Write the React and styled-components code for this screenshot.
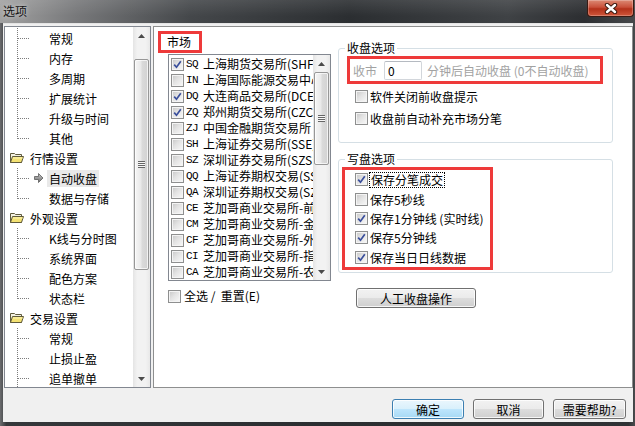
import React from "react";
import styled, { createGlobalStyle } from "styled-components";

const GlobalStyle = createGlobalStyle`
  html, body { margin: 0; padding: 0; background: #2b2e31; }
  body { font-family: "Noto Sans CJK SC", "Liberation Sans", sans-serif; font-size: 12px; color: #000; }
  * { box-sizing: border-box; }
`;

const RED = "#ee3a3a";

const Window = styled.div`
  width: 635px;
  height: 426px;
  display: flex;
  flex-direction: column;
  overflow: hidden;
  background: linear-gradient(to right, #6b6c6e 0%, #35383b 1%, #2b2e31 50%, #2f3235 99%, #4a4c4e 100%);
`;

const TitleBar = styled.div`
  height: 23px;
  flex: none;
  display: flex;
  justify-content: space-between;
  align-items: flex-start;
  padding: 0 1px 0 3px;
  background:
    linear-gradient(to bottom, rgba(255,255,255,0.10), rgba(0,0,0,0) 70%),
    linear-gradient(to right, #a2a2a2 0%, #77787a 12%, #44474a 30%, #2b2e31 55%, #3f4245 80%, #2c2e31 92%, #47494b 100%);
`;

const Title = styled.span`
  font-size: 12px;
  line-height: 14px;
  margin-top: 4px;
  color: #141414;
  text-shadow: 0 0 5px rgba(255,255,255,0.7);
`;

const CloseBtn = styled.div`
  width: 47px;
  height: 17px;
  display: flex;
  align-items: center;
  justify-content: center;
  border: 1px solid #3a1a12;
  border-top: none;
  border-radius: 0 0 4px 4px;
  background: linear-gradient(to bottom, #dc8a74 0%, #c9503a 45%, #b3311a 55%, #d0573b 100%);
  box-shadow: inset 0 0 0 1px rgba(255,255,255,0.25);
`;

const Client = styled.div`
  flex: 1;
  margin: 0 2px 4px 3px;
  padding: 2px 0 0 1px;
  background: #f0f0f0;
  border-top: 1px solid #e4e4e4;
  display: flex;
  flex-direction: column;
`;

const MainRow = styled.div`
  height: 362px;
  display: flex;
  gap: 2px;
`;

/* ---------- tree ---------- */

const Tree = styled.div`
  width: 147px;
  flex: none;
  display: flex;
  border: 1px solid #828790;
  background: #fff;
`;

const TreeBody = styled.div`
  flex: 1;
  overflow: hidden;
  padding-top: 1px;
`;

const TreeRow = styled.div`
  height: 20px;
  display: flex;
  align-items: center;
  white-space: nowrap;
`;

const IconSlot = styled.span`
  width: 16px;
  height: 16px;
  flex: none;
  display: flex;
  align-items: center;
  justify-content: center;
`;

const TreeLabel = styled.span`
  padding: 0 2px;
  line-height: 17px;
  margin-left: ${(p) => p.$indent || 0}px;
  background: ${(p) => (p.$selected ? "#e9e9e9" : "transparent")};
`;

const FolderSlot = styled.span`
  width: 16px;
  height: 14px;
  margin-left: 4px;
  flex: none;
  display: flex;
`;

/* ---------- scrollbars ---------- */

const Bar = styled.div`
  width: 17px;
  flex: none;
  display: flex;
  flex-direction: column;
  background: linear-gradient(to right, #e4e4e4, #f2f2f2 25%, #f2f2f2 75%, #e8e8e8);
`;

const ArrowBtn = styled.div`
  height: 17px;
  flex: none;
  display: flex;
  align-items: center;
  justify-content: center;
`;

const Track = styled.div`
  flex: 1;
  display: flex;
  flex-direction: column;
  padding: 0 1px;
`;

const Thumb = styled.div`
  margin-top: ${(p) => p.$offset}px;
  height: ${(p) => p.$size}px;
  border: 1px solid #979797;
  border-radius: 2px;
  background: linear-gradient(to right, #f6f6f6, #e9e9e9 45%, #dadada 55%, #d2d2d2);
  box-shadow: inset 0 0 0 1px rgba(255,255,255,0.7);
  display: flex;
  align-items: center;
  justify-content: center;
`;

const Grip = styled.div`
  width: 7px;
  height: 7px;
  background: repeating-linear-gradient(to bottom, #666 0 1px, #f7f7f7 1px 2px);
`;

function Tri({ up }) {
  return (
    <svg width="7" height="4" viewBox="0 0 7 4">
      <path d={up ? "M0 4 L3.5 0 L7 4Z" : "M0 0 L3.5 4 L7 0Z"} fill="#4a4a4a" />
    </svg>
  );
}

function ScrollBar({ offset, size }) {
  return (
    <Bar>
      <ArrowBtn><Tri up /></ArrowBtn>
      <Track>
        <Thumb $offset={offset} $size={size}><Grip /></Thumb>
      </Track>
      <ArrowBtn><Tri /></ArrowBtn>
    </Bar>
  );
}

/* ---------- icons ---------- */

function TreeLines({ last }) {
  return (
    <svg width="26" height="20" viewBox="0 0 26 20" style={{ flex: "none" }}>
      <line x1="12.5" y1="0" x2="12.5" y2={last ? 11 : 20} stroke="#7c7c7c" strokeDasharray="1 1" />
      <line x1="13" y1="10.5" x2="24" y2="10.5" stroke="#7c7c7c" strokeDasharray="1 1" />
    </svg>
  );
}

function Folder() {
  return (
    <svg width="16" height="14" viewBox="0 0 16 14">
      <path d="M1.5 2.5 h4 l1 1 h6 v8 h-11z" fill="#f4f1e2" stroke="#5f5a3c" />
      <path d="M1.5 11.5 l2 -6 h11 l-2 6z" fill="#f3e172" stroke="#5f5a3c" />
      <path d="M4 7 h9.5" stroke="#fff6b8" />
    </svg>
  );
}

function SelArrow() {
  return (
    <svg width="10" height="10" viewBox="0 0 10 10">
      <defs>
        <linearGradient id="ag" x1="0" y1="0" x2="0" y2="1">
          <stop offset="0" stopColor="#c8c8c8" />
          <stop offset="1" stopColor="#6e6e6e" />
        </linearGradient>
      </defs>
      <path d="M0.5 3.5 h4 v-3 l4.5 4.5 -4.5 4.5 v-3 h-4z" fill="url(#ag)" stroke="#5a5a5a" strokeWidth="0.8" />
    </svg>
  );
}

function CloseX() {
  return (
    <svg width="14" height="11" viewBox="0 0 14 11">
      <path d="M3 2 L11 9 M11 2 L3 9" stroke="#3b1a10" strokeWidth="4.4" strokeLinecap="round" />
      <path d="M3 2 L11 9 M11 2 L3 9" stroke="#fff" strokeWidth="2.4" strokeLinecap="round" />
    </svg>
  );
}

/* ---------- checkbox ---------- */

const Box = styled.span`
  width: 13px;
  height: 13px;
  flex: none;
  display: flex;
  align-items: center;
  justify-content: center;
  border: 1px solid #8e8f8f;
  background: linear-gradient(135deg, #c6c6c6 0%, #e3e3e3 45%, #f9f9f9 100%);
  box-shadow: inset 0 0 0 1px #f4f4f4;
`;

function Check({ checked }) {
  return (
    <Box>
      {checked && (
        <svg width="9" height="9" viewBox="0 0 9 9">
          <path d="M1.2 4.6 L3.5 7.2 L7.8 1.2" fill="none" stroke="#3a4f9c" strokeWidth="1.7" />
        </svg>
      )}
    </Box>
  );
}

/* ---------- right panel ---------- */

const Panel = styled.div`
  flex: 1;
  display: flex;
  padding: 4px 0 0 4px;
  border: 1px solid #8e8f8f;
  background: #fff;
`;

const MarketCol = styled.div`
  width: 173px;
  flex: none;
  display: flex;
  flex-direction: column;
`;

const RedLabel = styled.div`
  width: 44px;
  height: 22px;
  border: 3px solid ${RED};
  padding-left: 6px;
  line-height: 16px;
`;

const ListBox = styled.div`
  margin: 1px 0 0 10px;
  width: 163px;
  height: 227px;
  display: flex;
  border: 1px solid #828790;
  background: #fff;
`;

const ListBody = styled.div`
  flex: 1;
  overflow: hidden;
  padding-top: 1px;
`;

const MarketRow = styled.div`
  height: 16px;
  display: flex;
  align-items: center;
  padding-left: 2px;
  white-space: nowrap;
`;

const Code = styled.span`
  width: 17px;
  margin-left: 2px;
  flex: none;
  font-family: "Liberation Mono", monospace;
  font-size: 11px;
  letter-spacing: -0.5px;
`;

const MarketName = styled.span`
  line-height: 16px;
`;

const SelectAll = styled.div`
  margin: 8px 0 0 10px;
  display: flex;
  align-items: center;
  gap: 3px;
  line-height: 14px;
  white-space: pre;
`;

const OptionsCol = styled.div`
  margin: 9px 0 0 7px;
  width: 275px;
  display: flex;
  flex-direction: column;
`;

const Group = styled.fieldset`
  margin: ${(p) => p.$top || 0}px 0 0 0;
  padding: 0 0 ${(p) => p.$bottom}px 0;
  border: 1px solid #d5dfe5;
  border-radius: 3px;
  min-width: 0;
`;

const Legend = styled.legend`
  margin-left: 6px;
  padding: 0 2px;
  line-height: 16px;
  font-size: 12px;
`;

const InputRow = styled.div`
  margin: 0 9px 0 8px;
  height: 28px;
  border: 3px solid ${RED};
  display: flex;
  align-items: center;
  padding-left: 3px;
  color: #a2a2a2;
  white-space: nowrap;
`;

const NumInput = styled.input`
  width: 38px;
  height: 19px;
  margin: 0 5px 0 7px;
  padding: 0 0 0 3px;
  border: 1px solid #d2d6db;
  border-top-color: #b5bac1;
  border-radius: 2px;
  font: inherit;
  font-size: 12px;
  color: #000;
  background: #fff;
  outline: none;
`;

const OptRow = styled.div`
  height: ${(p) => p.$h}px;
  display: flex;
  align-items: center;
  gap: 2px;
  margin-left: ${(p) => p.$indent}px;
  white-space: nowrap;
`;

const CheckList = styled.div`
  margin: 0 0 0 3px;
  width: 151px;
  height: 103px;
  border: 3px solid ${RED};
  padding-left: 10px;
`;

const Focused = styled.span`
  outline: 1px dotted #000;
  outline-offset: 0;
  padding: 0 1px;
  line-height: 14px;
`;

const Btn = styled.div`
  width: ${(p) => p.$w}px;
  height: 20px;
  flex: none;
  display: flex;
  align-items: center;
  justify-content: center;
  border: 1px solid ${(p) => (p.$default ? "#3c7fb1" : "#707070")};
  border-radius: 3px;
  font-size: 12px;
  background: ${(p) =>
    p.$default
      ? "linear-gradient(to bottom, #eaf6fd 0%, #d9f0fc 49%, #bee6fd 50%, #a7d9f5 100%)"
      : "linear-gradient(to bottom, #f2f2f2 0%, #ebebeb 49%, #dddddd 50%, #cfcfcf 100%)"};
  box-shadow: inset 0 0 0 1px rgba(255,255,255,0.8);
`;

const ManualBtn = styled(Btn)`
  margin: 15px 0 0 18px;
`;

const Footer = styled.div`
  flex: 1;
  display: flex;
  justify-content: flex-end;
  align-items: flex-start;
  gap: 9px;
  padding: 11px 7px 0 0;
`;

/* ---------- data ---------- */

const treeRows = [
  { kind: "child", label: "常规" },
  { kind: "child", label: "内存" },
  { kind: "child", label: "多周期" },
  { kind: "child", label: "扩展统计" },
  { kind: "child", label: "升级与时间" },
  { kind: "child", label: "其他", last: true },
  { kind: "parent", label: "行情设置" },
  { kind: "child", label: "自动收盘", selected: true },
  { kind: "child", label: "数据与存储", last: true },
  { kind: "parent", label: "外观设置" },
  { kind: "child", label: "K线与分时图" },
  { kind: "child", label: "系统界面" },
  { kind: "child", label: "配色方案" },
  { kind: "child", label: "状态栏", last: true },
  { kind: "parent", label: "交易设置" },
  { kind: "child", label: "常规" },
  { kind: "child", label: "止损止盈" },
  { kind: "child", label: "追单撤单" },
];

const markets = [
  ["SQ", "上海期货交易所(SHFE)", true],
  ["IN", "上海国际能源交易中心", false],
  ["DQ", "大连商品交易所(DCE)", true],
  ["ZQ", "郑州期货交易所(CZCE)", true],
  ["ZJ", "中国金融期货交易所", false],
  ["SH", "上海证券交易所(SSE)", false],
  ["SZ", "深圳证券交易所(SZSE)", false],
  ["QQ", "上海证券期权交易(SSE)", false],
  ["QA", "深圳证券期权交易(SZSE)", false],
  ["CE", "芝加哥商业交易所-前", false],
  ["CM", "芝加哥商业交易所-金属", false],
  ["CF", "芝加哥商业交易所-外汇", false],
  ["CI", "芝加哥商业交易所-指数", false],
  ["CA", "芝加哥商业交易所-农产品", false],
];

const saveOptions = [
  ["保存分笔成交", true, true],
  ["保存5秒线", false],
  ["保存1分钟线 (实时线)", true],
  ["保存5分钟线", true],
  ["保存当日日线数据", true],
];

export default function App() {
  return (
    <>
      <GlobalStyle />
      <Window>
        <TitleBar>
          <Title>选项</Title>
          <CloseBtn><CloseX /></CloseBtn>
        </TitleBar>
        <Client>
          <MainRow>
            <Tree>
              <TreeBody>
                {treeRows.map((r, i) =>
                  r.kind === "parent" ? (
                    <TreeRow key={i}>
                      <FolderSlot><Folder /></FolderSlot>
                      <TreeLabel $indent={3}>{r.label}</TreeLabel>
                    </TreeRow>
                  ) : (
                    <TreeRow key={i}>
                      <TreeLines last={r.last} />
                      <IconSlot>{r.selected && <SelArrow />}</IconSlot>
                      <TreeLabel $selected={r.selected}>{r.label}</TreeLabel>
                    </TreeRow>
                  )
                )}
              </TreeBody>
              <ScrollBar offset={15} size={211} />
            </Tree>

            <Panel>
              <MarketCol>
                <RedLabel>市场</RedLabel>
                <ListBox>
                  <ListBody>
                    {markets.map(([code, name, on]) => (
                      <MarketRow key={code}>
                        <Check checked={on} />
                        <Code>{code}</Code>
                        <MarketName>{name}</MarketName>
                      </MarketRow>
                    ))}
                  </ListBody>
                  <ScrollBar offset={0} size={93} />
                </ListBox>
                <SelectAll>
                  <Check />
                  <span>全选 /  重置(E)</span>
                </SelectAll>
              </MarketCol>

              <OptionsCol>
                <Group $bottom={13}>
                  <Legend>收盘选项</Legend>
                  <InputRow>
                    收市
                    <NumInput readOnly value="0" />
                    分钟后自动收盘 (0不自动收盘)
                  </InputRow>
                  <OptRow $h={22} $indent={16} style={{ marginTop: 1 }}>
                    <Check />
                    <span>软件关闭前收盘提示</span>
                  </OptRow>
                  <OptRow $h={22} $indent={16}>
                    <Check />
                    <span>收盘前自动补充市场分笔</span>
                  </OptRow>
                </Group>

                <Group $top={8} $bottom={2}>
                  <Legend>写盘选项</Legend>
                  <CheckList>
                    {saveOptions.map(([label, on, focus]) => (
                      <OptRow key={label} $h={19.4} $indent={0}>
                        <Check checked={on} />
                        {focus ? <Focused>{label}</Focused> : <span>{label}</span>}
                      </OptRow>
                    ))}
                  </CheckList>
                </Group>

                <ManualBtn $w={120}>人工收盘操作</ManualBtn>
              </OptionsCol>
            </Panel>
          </MainRow>

          <Footer>
            <Btn $w={72} $default>确定</Btn>
            <Btn $w={71}>取消</Btn>
            <Btn $w={73}>需要帮助?</Btn>
          </Footer>
        </Client>
      </Window>
    </>
  );
}
